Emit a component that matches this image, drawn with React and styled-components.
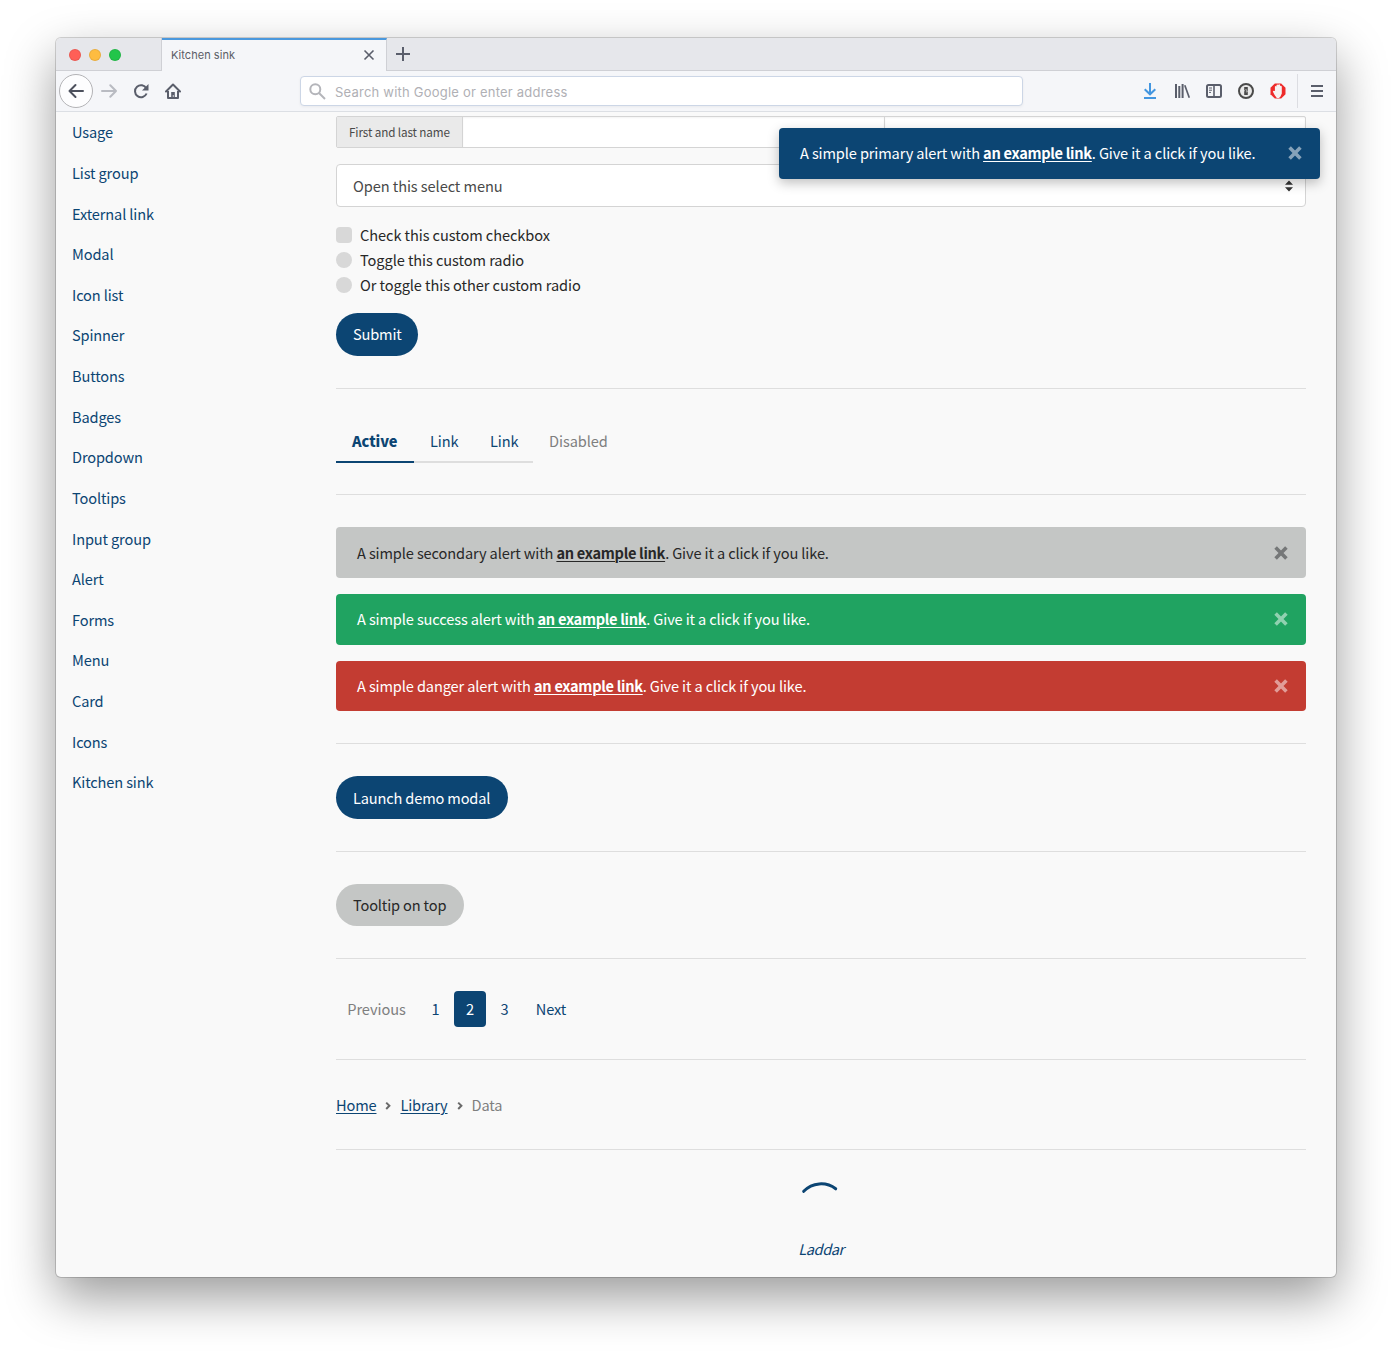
import React from "react";
import styled, { createGlobalStyle, css } from "styled-components";

const blue = "#0c4573";
const ink = "#282828";
const muted = "#7f7f7f";
const line = "#dedede";

const GlobalStyle = createGlobalStyle`
  *, *::before, *::after { box-sizing: border-box; }
  body {
    margin: 0;
    background: #fff;
    color: ${ink};
    font-family: "Noto Sans CJK SC", "Open Sans", sans-serif;
    font-size: 14.6px;
    letter-spacing: -0.08px;
    line-height: 24px;
    overflow: hidden;
  }
`;

const Desktop = styled.div`
  height: 1351px;
  padding: 38px 56px 0;
`;

const Window = styled.div`
  width: 1280px;
  height: 1239px;
  display: flex;
  flex-direction: column;
  border-radius: 5px;
  background: #f9f9f9;
  box-shadow: 0 0 0 1px rgba(0, 0, 0, 0.16), 0 20px 50px rgba(0, 0, 0, 0.4);
`;

const TitleBar = styled.div`
  display: flex;
  height: 33px;
  background: #e6e7eb;
  border-radius: 5px 5px 0 0;
  box-shadow: inset 0 -1px 0 #cfd0d5;
`;

const Lights = styled.div`
  display: flex;
  align-items: center;
  gap: 8px;
  width: 106px;
  padding: 0 0 0 13px;
  border-right: 1px solid #cfd0d5;
`;

const Light = styled.span`
  width: 12px;
  height: 12px;
  border-radius: 50%;
  background: ${(p) => p.$color};
  border: 1px solid rgba(0, 0, 0, 0.08);
`;

const Tab = styled.div`
  display: flex;
  align-items: center;
  justify-content: space-between;
  width: 225px;
  padding: 0 11px 2px 9px;
  background: #f5f6f9;
  border-top: 2px solid #4a98dd;
  border-right: 1px solid #cfd0d5;
  color: #5b5d66;
  font-family: Inter, sans-serif;
  font-size: 11px;
  letter-spacing: 0.04px;
`;

const NewTab = styled.div`
  display: flex;
  align-items: center;
  padding: 0 0 1px 8px;
`;

const Toolbar = styled.div`
  display: flex;
  align-items: center;
  height: 41px;
  background: #f5f6f9;
  border-bottom: 1px solid #dcdfe4;
`;

const NavButtons = styled.div`
  display: flex;
  align-items: center;
  width: 244px;
  padding-left: 3px;
`;

const BackButton = styled.span`
  display: grid;
  place-items: center;
  width: 34px;
  height: 34px;
  margin-right: 8px;
  border: 1px solid #b3b3b6;
  border-radius: 50%;
  background: #fdfdfe;
`;

const NavIcon = styled.span`
  display: flex;
  align-items: center;
  justify-content: center;
  width: 16px;
  height: 16px;
  margin-right: 16px;
`;

const AddressBar = styled.div`
  display: flex;
  align-items: center;
  flex-shrink: 0;
  gap: 9px;
  width: 723px;
  height: 30px;
  padding: 1px 0 0 8px;
  background: #fff;
  border: 1px solid #ccd6e6;
  border-radius: 4px;
  box-shadow: 0 1px 3px rgba(0, 0, 0, 0.05);
  color: #b0b0b5;
  font-family: Inter, sans-serif;
  font-size: 13px;
  letter-spacing: 0.22px;
`;

const Tools = styled.div`
  display: flex;
  align-items: center;
  gap: 16px;
  flex: 1;
  height: 100%;
  padding-left: 119px;
`;

const MenuButton = styled.span`
  display: grid;
  place-items: center;
  align-self: center;
  width: 39px;
  height: 34px;
  margin-left: -5px;
  border-left: 1px solid #dcdde2;
`;

const Body = styled.div`
  position: relative;
  display: flex;
  flex: 1;
`;

const Sidebar = styled.nav`
  width: 280px;
  padding-left: 16px;
`;

const SideLink = styled.a`
  display: flex;
  align-items: center;
  height: 40.64px;
  color: ${blue};
  text-decoration: none;
  letter-spacing: -0.14px;
`;

const Main = styled.main`
  width: 970px;
  padding-top: 4px;
`;

const InputGroup = styled.div`
  display: flex;
  height: 32px;
  border: 1px solid #d4d4d4;
  border-radius: 2px;
  background: #fff;
`;

const Addon = styled.span`
  display: flex;
  align-items: center;
  width: 125px;
  padding: 0 0 1px 12px;
  background: #eaeaea;
  color: #494949;
  font-size: 11.7px;
  letter-spacing: -0.12px;
`;

const Field = styled.span`
  flex: ${(p) => (p.$w ? "none" : 1)};
  width: ${(p) => p.$w}px;
  border-left: 1px solid #d4d4d4;
  box-shadow: inset 0 1px 2px rgba(0, 0, 0, 0.05);
`;

const Select = styled.div`
  display: flex;
  align-items: center;
  justify-content: space-between;
  height: 43px;
  margin-top: 16px;
  padding: 1px 12px 0 16px;
  background: #fff;
  border: 1px solid #d4d4d4;
  border-radius: 4px;
  color: #494949;
`;

const Options = styled.div`
  padding-top: 16px;
`;

const Option = styled.label`
  display: flex;
  align-items: center;
  gap: 8px;
  height: 25px;
  padding-bottom: 2px;
`;

const Mark = styled.span`
  width: 16px;
  height: 16px;
  background: #d8d8d8;
  border-radius: ${(p) => (p.$round ? "50%" : "4px")};
`;

const Button = styled.button`
  display: block;
  height: ${(p) => p.$h ?? 43}px;
  width: ${(p) => p.$w}px;
  padding: ${(p) => p.$drop ?? 0}px 0 1px 17px;
  border: 0;
  border-radius: 22px;
  text-align: left;
  font: inherit;
  letter-spacing: -0.16px;
  white-space: nowrap;
  ${(p) =>
    p.$secondary
      ? css`
          background: #c4c6c5;
          color: ${ink};
        `
      : css`
          background: ${blue};
          color: #fff;
        `}
`;

const Section = styled.section`
  height: ${(p) => p.$h}px;
  padding-top: ${(p) => p.$top ?? 32}px;
  border-top: ${(p) => (p.$first ? "0" : `1px solid ${line}`)};
`;

const Tabs = styled.div`
  display: flex;
`;

const TabLink = styled.span`
  width: ${(p) => p.$w}px;
  height: 42px;
  padding: 8px 0 0 16px;
  color: ${(p) => (p.$disabled ? muted : blue)};
  border-bottom: 2px solid ${(p) => (p.$active ? blue : p.$disabled ? "transparent" : line)};
  font-weight: ${(p) => (p.$active ? 900 : 400)};
`;

const alertColors = {
  primary: ["#0c4573", "#fff", "#86a2b9"],
  secondary: ["#c4c6c5", ink, "#757778"],
  success: ["#20a361", "#fff", "#90d1b0"],
  danger: ["#c33c32", "#fff", "#e19d98"],
};

const Alert = styled.div`
  display: flex;
  align-items: center;
  justify-content: space-between;
  height: 50.8px;
  margin-bottom: 16px;
  padding: ${(p) => (p.$kind === "secondary" ? 1 : 0)}px 17px 0 21px;
  border-radius: 4px;
  letter-spacing: -0.13px;
  white-space: nowrap;
  background: ${(p) => alertColors[p.$kind][0]};
  color: ${(p) => alertColors[p.$kind][1]};
`;

const Toast = styled(Alert)`
  position: absolute;
  top: 16px;
  left: 723px;
  width: 541px;
  box-shadow: 0 4px 12px rgba(0, 0, 0, 0.25);
`;

const AlertLink = styled.a`
  font-weight: 700;
  color: inherit;
  letter-spacing: -0.3px;
  text-decoration: underline;
  text-decoration-thickness: 1px;
  text-underline-offset: 2px;
`;

const Pagination = styled.div`
  display: flex;
  gap: 4px;
`;

const Page = styled.span`
  width: ${(p) => p.$w}px;
  height: 36px;
  padding-top: 6px;
  text-align: center;
  border-radius: 4px;
  color: ${(p) => (p.$active ? "#fff" : p.$disabled ? muted : blue)};
  background: ${(p) => (p.$active ? blue : "transparent")};
`;

const Breadcrumb = styled.div`
  display: flex;
  align-items: center;
  gap: 8px;
  color: ${muted};
  letter-spacing: -0.15px;
`;

const Crumb = styled.a`
  color: ${blue};
  text-decoration: underline;
  text-decoration-thickness: 1px;
  text-underline-offset: 2px;
`;

const Loading = styled.div`
  display: flex;
  flex-direction: column;
  align-items: center;
  gap: 42px;
  color: ${blue};
  font-style: italic;
  letter-spacing: -0.4px;
`;

const Svg = ({ w = 16, h = w, children, ...rest }) => (
  <svg width={w} height={h} viewBox={`0 0 ${w} ${h}`} fill="none" stroke="#5a5e6b" strokeWidth="2" {...rest}>
    {children}
  </svg>
);

const Close = ({ color }) => (
  <Svg w={16} stroke={color} strokeWidth="3.6">
    <path d="M2.6 2.6 13.4 13.4M13.4 2.6 2.6 13.4" />
  </Svg>
);

const Message = ({ kind, as: Box = Alert }) => (
  <Box $kind={kind}>
    <span>
      A simple {kind} alert with <AlertLink>an example link</AlertLink>. Give it a click if you like.
    </span>
    <Close color={alertColors[kind][2]} />
  </Box>
);

const Chevron = () => (
  <Svg w={8} h={10} stroke="#6a6a6a" strokeWidth="2">
    <path d="M2.2 2.6 5.4 5.8 2.2 9" />
  </Svg>
);

const links = [
  "Usage", "List group", "External link", "Modal", "Icon list", "Spinner", "Buttons", "Badges", "Dropdown",
  "Tooltips", "Input group", "Alert", "Forms", "Menu", "Card", "Icons", "Kitchen sink",
];

export default function App() {
  return (
    <Desktop>
      <GlobalStyle />
      <Window>
        <TitleBar>
          <Lights>
            <Light $color="#ff5f57" />
            <Light $color="#febc40" />
            <Light $color="#22c54a" />
          </Lights>
          <Tab>
            Kitchen sink
            <Svg w={12} strokeWidth="1.6"><path d="M1.5 1.5l9 9M10.500 1.500l-9 9" /></Svg>
          </Tab>
          <NewTab>
            <Svg w={16}><path d="M8 1v14M1 8h14" /></Svg>
          </NewTab>
        </TitleBar>
        <Toolbar>
          <NavButtons>
            <BackButton>
              <Svg w={18} stroke="#4c505d" strokeLinecap="round" strokeLinejoin="round"><path d="M16 9H2.500M8.500 3 2.500 9l6 6" /></Svg>
            </BackButton>
            <NavIcon>
              <Svg w={16} stroke="#b9bbc2" strokeLinecap="round" strokeLinejoin="round"><path d="M1 8h14M9.300 2.300 15 8l-5.700 5.700" /></Svg>
            </NavIcon>
            <NavIcon>
              <Svg w={16}>
                <path d="M13.300 5.400A6 6 0 1 0 13.600 10.500" />
                <path d="M15.500 1v6.500H9z" fill="#5a5e6b" stroke="none" />
              </Svg>
            </NavIcon>
            <NavIcon>
              <Svg w={16}>
                <path d="M1 8.500 8 1.500l7 7" strokeLinecap="round" strokeLinejoin="round" />
                <path d="M3 8v7h10V8" strokeLinejoin="round" />
                <path d="M6.200 14V9h3.600v5h-1.200v-2H7.800v2z" fill="#5a5e6b" stroke="none" />
              </Svg>
            </NavIcon>
          </NavButtons>
          <AddressBar>
            <Svg w={17} stroke="#b4b5ba"><circle cx="6.300" cy="6.300" r="5" /><path d="M10 10l6 6" /></Svg>
            Search with Google or enter address
          </AddressBar>
          <Tools>
            <Svg w={16} stroke="#4396e0">
              <path d="M8 0v11M2.700 6.200 8 11.300l5.300-5.100" />
              <path d="M2 15h12" />
            </Svg>
            <Svg w={16}><path d="M2 1v14M5.300 3v12M8.600 1v14" /><path d="M10.800 2.200 15.300 14.800" strokeWidth="1.700" /></Svg>
            <Svg w={16}>
              <rect x="1" y="2" width="14" height="12" rx="1.500" />
              <path d="M8 2v12" strokeWidth="1.600" />
              <path d="M3 5h3M3 7.200h3M3 9.400h2" strokeWidth="1" />
            </Svg>
            <Svg w={16} stroke="#4a4a4a">
              <circle cx="8" cy="8" r="7" fill="#e9e9e9" />
              <path d="M6.200 4h3.600v3.500l-.6.700.6.700V12H6.200V8.500l.6-.7-.6-.7z" fill="#4a4a4a" stroke="none" />
              <path d="M7.400 6.500h1v3" stroke="#c5c5c5" strokeWidth=".7" />
            </Svg>
            <Svg w={16} stroke="none">
              <path d="M4.800.5h6.400l4.300 4.300v6.400l-4.300 4.300H4.800L.5 11.200V4.800z" fill="#ee2a2a" />
              <path d="M4.900 8V3.500l.8-.6.8.5V2l.9-.6.8.6.9-1 1 .9v1l.9-.2.8.8v7L10.500 13.500 9 14.900H6.800L4.600 12 2.800 8.600l.9-.8z" fill="#f7f2f2" />
            </Svg>
            <MenuButton>
              <Svg w={14}><path d="M1 2h12M1 7h12M1 12h12" /></Svg>
            </MenuButton>
          </Tools>
        </Toolbar>
        <Body>
          <Sidebar>
            {links.map((l) => (
              <SideLink key={l}>{l}</SideLink>
            ))}
          </Sidebar>
          <Main>
            <Section $h={272} $top={0} $first>
              <InputGroup>
                <Addon>First and last name</Addon>
                <Field $w={422} />
                <Field />
              </InputGroup>
              <Select>
                Open this select menu
                <Svg w={8} h={12} fill="#333" stroke="none"><path d="M0 4.800 4 .5l4 4.300zM0 7.200h8l-4 4.300z" /></Svg>
              </Select>
              <Options>
                <Option><Mark />Check this custom checkbox</Option>
                <Option><Mark $round />Toggle this custom radio</Option>
                <Option><Mark $round />Or toggle this other custom radio</Option>
              </Options>
              <Section $h={59} $top={15} $first>
                <Button $w={82}>Submit</Button>
              </Section>
            </Section>
            <Section $h={106}>
              <Tabs>
                <TabLink $w={78} $active>Active</TabLink>
                <TabLink $w={60}>Link</TabLink>
                <TabLink $w={59}>Link</TabLink>
                <TabLink $w={90} $disabled>Disabled</TabLink>
              </Tabs>
            </Section>
            <Section $h={249}>
              <Message kind="secondary" />
              <Message kind="success" />
              <Message kind="danger" />
            </Section>
            <Section $h={108}>
              <Button $w={172} $drop={2}>Launch demo modal</Button>
            </Section>
            <Section $h={107}>
              <Button $w={128} $h={42} $secondary>Tooltip on top</Button>
            </Section>
            <Section $h={101}>
              <Pagination>
                <Page $w={81} $disabled>Previous</Page>
                <Page $w={29}>1</Page>
                <Page $w={32} $active>2</Page>
                <Page $w={29}>3</Page>
                <Page $w={56}>Next</Page>
              </Pagination>
            </Section>
            <Section $h={90} $top={33}>
              <Breadcrumb>
                <Crumb>Home</Crumb>
                <Chevron />
                <Crumb>Library</Crumb>
                <Chevron />
                <span>Data</span>
              </Breadcrumb>
            </Section>
            <Section $h={127} $top={31}>
              <Loading>
                <Svg w={40} h={14} stroke={blue} strokeWidth="3"><path d="M2.700 10.300A24 24 0 0 1 34.700 7.800" strokeLinecap="round" /></Svg>
                Laddar
              </Loading>
            </Section>
          </Main>
          <Message kind="primary" as={Toast} />
        </Body>
      </Window>
    </Desktop>
  );
}
